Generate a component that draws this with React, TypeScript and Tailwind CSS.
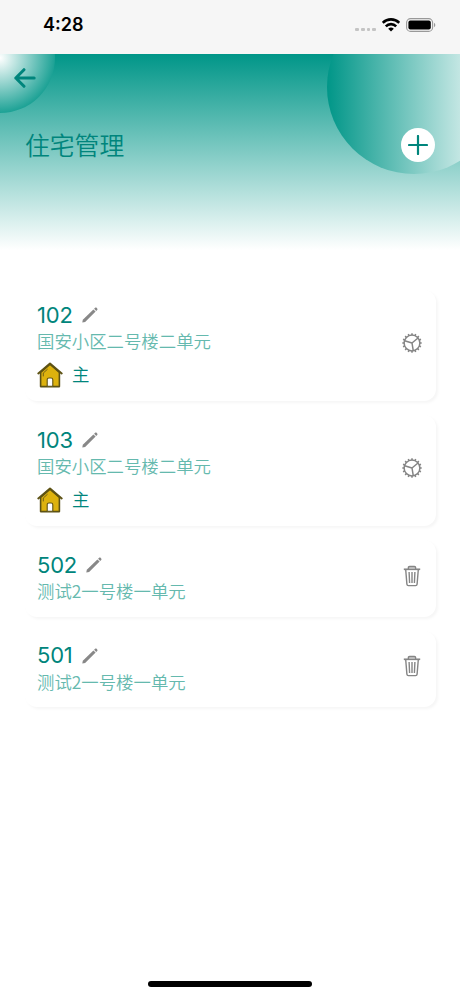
type Residence = {
  id: number
  room: string
  address: string
  primary: boolean
}

const residences: Residence[] = [
  { id: 1, room: '102', address: '国安小区二号楼二单元', primary: true },
  { id: 2, room: '103', address: '国安小区二号楼二单元', primary: true },
  { id: 3, room: '502', address: '测试2一号楼一单元', primary: false },
  { id: 4, room: '501', address: '测试2一号楼一单元', primary: false },
]

const gearTeeth = Array.from({ length: 16 }, (_, i) => i * 22.5)

function StatusBar() {
  return (
    <div className="flex h-[54px] items-start justify-between bg-[#f6f6f6] pr-[24px] pl-[43px]">
      <span className="mt-[14px] font-['Inter','Liberation_Sans',sans-serif] text-[18px] leading-[22px] font-semibold text-black">
        4:28
      </span>

      <div className="mt-[17px] flex h-4 items-center">
        <div className="mt-[9px] mr-[6px] flex gap-[2px]">
          <span className="size-[3.75px] rounded-[1px] bg-[#c4c4c4]" />
          <span className="size-[3.75px] rounded-[1px] bg-[#c4c4c4]" />
          <span className="size-[3.75px] rounded-[1px] bg-[#c4c4c4]" />
          <span className="size-[3.75px] rounded-[1px] bg-[#c4c4c4]" />
        </div>
        <svg width="18" height="14" viewBox="0 0 18 14" fill="none" stroke="#000" strokeWidth="2.6">
          <path d="M.7 4.8a11.8 11.8 0 0 1 16.6 0" />
          <path d="M3.8 8.3a7.4 7.4 0 0 1 10.4 0" />
          <path d="M9 13.6 6.2 10.7a4.1 4.1 0 0 1 5.6 0Z" fill="#000" stroke="none" />
        </svg>
        <svg className="ml-[6px]" width="30" height="14" viewBox="0 0 30 14">
          <rect x=".6" y=".6" width="26" height="12.8" rx="4" fill="none" stroke="#999" strokeWidth="1.1" />
          <rect x="2.4" y="2.4" width="22.4" height="9.2" rx="2" fill="#000" />
          <path d="M28 4.8c1.8.7 1.8 3.7 0 4.4Z" fill="#999" />
        </svg>
      </div>
    </div>
  )
}

function PencilIcon() {
  return (
    <svg width="16" height="16" viewBox="0 0 16 16" fill="#888">
      <path d="M.3 15.6.8 12.8 11.4 2.4 13.6 4.6 3.1 15Z" />
      <path d="m12.1 1.8 1-1c.5-.5 1-.5 1.5 0l.6.6c.5.5.5 1 0 1.5l-1 1Z" />
    </svg>
  )
}

function HouseIcon() {
  return (
    <svg width="26" height="26" viewBox="0 0 26 26" strokeLinejoin="round" strokeLinecap="round">
      <path d="M3.6 10.5V24.6H22.4V10.5L13 2.2Z" fill="#ddb20d" stroke="#5d5214" strokeWidth="1.6" />
      <path d="M1.3 11.4 13 1.5l11.7 9.9" fill="none" stroke="#5d5214" strokeWidth="2" />
      <path d="M6.3 14v-3l4-3.6" fill="none" stroke="#74621a" strokeWidth="1" />
      <path d="M10.2 24.3v-6.5c0-1.2.8-1.8 1.8-1.8h2c1 0 1.8.6 1.8 1.8v6.5Z" fill="#fff" stroke="#5d5214" strokeWidth="1.1" />
    </svg>
  )
}

function GearIcon() {
  return (
    <svg width="20" height="20" viewBox="0 0 20 20" fill="none" stroke="#858585" strokeWidth="1.5">
      <circle cx="10" cy="10" r="7.9" />
      {gearTeeth.map((angle) => (
        <path key={angle} d="M10 2.2V.3" transform={`rotate(${angle} 10 10)`} />
      ))}
      <path d="M10 10 2.6 7.8M10 10l6-5M10 10l1.3 7.8" />
    </svg>
  )
}

function TrashIcon() {
  return (
    <svg className="mr-px" width="18" height="22" viewBox="0 0 18 22" fill="none" stroke="#858585" strokeWidth="1.4">
      <path d="M.8 4.3h16.4" strokeWidth="1.7" />
      <path d="M5.4 4V2.6c0-.8.4-1.2 1.2-1.2h4.8c.8 0 1.2.4 1.2 1.2V4" fill="#bbb" />
      <path d="m2.7 4.5 1.2 14.6c.1 1 .6 1.5 1.5 1.5h7.2c.9 0 1.4-.5 1.5-1.5l1.2-14.6" />
      <path d="m6.1 7 .5 11M9 7v11M11.9 7l-.5 11" />
    </svg>
  )
}

function ResidenceCard({ residence }: { residence: Residence }) {
  return (
    <div
      className={`flex items-center justify-between rounded-[12px] bg-white pr-[14px] pl-[12px] shadow-[2px_2px_3px_rgba(0,0,0,0.04)] ${
        residence.primary ? 'h-[111px]' : 'h-[76.5px]'
      }`}
    >
      <div className="flex h-full flex-col pt-[11px]">
        <div className="flex h-7 items-center gap-[9px]">
          <span className="font-['Inter','Liberation_Sans',sans-serif] text-[22px] tracking-[-0.2px] text-[#00857c]">
            {residence.room}
          </span>
          <PencilIcon />
        </div>
        <p className="h-6 font-['Noto_Sans_CJK_SC',sans-serif] text-[17.4px] leading-[23px] font-[350] text-[#65b9ae]">
          {residence.address}
        </p>

        {residence.primary && (
          <div className="mt-[9px] flex h-[26px] items-center gap-[9px]">
            <HouseIcon />
            <span className="mb-[2px] text-[17.4px] leading-6 font-[350] text-[#00857c]">主</span>
          </div>
        )}
      </div>

      <div className={residence.primary ? 'mb-[6px]' : 'mb-[5px]'}>
        {residence.primary ? <GearIcon /> : <TrashIcon />}
      </div>
    </div>
  )
}

function App() {
  return (
    <main className="flex h-[996px] w-[460px] flex-col overflow-hidden bg-white font-['Noto_Sans_CJK_SC',sans-serif]">
      <StatusBar />

      <header className="relative h-[196px] overflow-hidden bg-linear-to-b/srgb from-[#009688] to-white">
        <div className="absolute top-[-54px] left-[327px] size-[174px] rounded-full bg-linear-to-r/srgb from-[#009688] to-white" />
        <div className="absolute top-[-51px] left-[-55px] size-[110px] rounded-full bg-[radial-gradient(circle_closest-side,white_0%,#009688_112%)]" />

        <div className="relative flex h-12 items-center pl-[14px]">
          <svg width="22" height="20" viewBox="0 0 22 20" fill="none" stroke="#00857c" strokeWidth="3" strokeLinecap="round" strokeLinejoin="round">
            <path d="M20.2 10H1.8M10 1.7 1.8 10l8.2 8.3" />
          </svg>
        </div>

        <div className="relative flex h-[85px] items-center justify-between pr-[25px] pl-[25px]">
          <h1 className="mt-px text-[24.8px] font-[350] text-[#00857c]">住宅管理</h1>
          <button type="button" aria-label="添加" className="flex size-[34px] items-center justify-center rounded-full bg-white">
            <svg width="20" height="20" viewBox="0 0 20 20" stroke="#00857c" strokeWidth="2.2" strokeLinecap="round">
              <path d="M10 1v18M1 10h18" />
            </svg>
          </button>
        </div>
      </header>

      <section className="flex flex-1 flex-col gap-[14px] pt-10 pr-6 pl-[25px]">
        {residences.map((residence) => (
          <ResidenceCard key={residence.id} residence={residence} />
        ))}
      </section>

      <div className="mx-auto mb-[9px] h-[6px] w-[164px] rounded-full bg-black" />
    </main>
  )
}

export default App
